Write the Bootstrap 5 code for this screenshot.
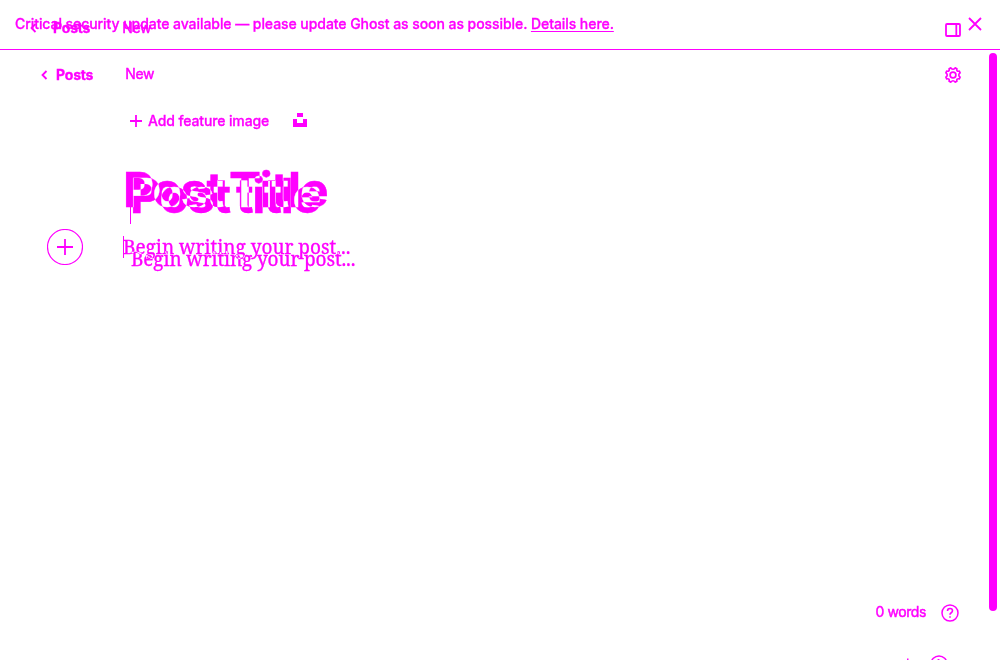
<!DOCTYPE html>
<html lang="en">
<head>
<meta charset="utf-8">
<meta name="viewport" content="width=device-width, initial-scale=1">
<title>Post editor</title>
<link href="https://cdn.jsdelivr.net/npm/bootstrap@5.3.0/dist/css/bootstrap.min.css" rel="stylesheet">
<style>
  :root { --ink: #ff00ff; }
  body { width: 1000px; height: 660px; overflow: hidden; background: #fff; color: var(--ink); font: 500 14px/20px Inter, sans-serif; -webkit-text-stroke: .3px var(--ink); }
  svg { display: block; fill: none; stroke: var(--ink); stroke-width: 1.8; flex: none; }
  .notice { height: 50px; border-bottom: 1px solid var(--ink); padding: 0 18px 2px 15px; letter-spacing: -.062px; white-space: nowrap; }
  .notice a { color: inherit; text-underline-offset: 2px; }
  .behind { position: absolute; left: 30px; top: 18px; }
  /* a second copy of the text cancels the first where they cross */
  .cross { position: absolute; color: #0f0; -webkit-text-stroke-color: #0f0; mix-blend-mode: difference; white-space: nowrap; }
  .toolbar { height: 50px; padding: 0 39px 0 41px; }
  .back { letter-spacing: -.2px; }
  .plain { font-weight: 400; -webkit-text-stroke-width: .45px; letter-spacing: -.4px; }
  .feature { padding: 11px 0 0 130px; height: 62px; letter-spacing: -.12px; }
  .title { font-size: 48px; line-height: 56px; font-weight: 700; letter-spacing: -1.2px; word-spacing: -4px; -webkit-text-stroke-width: .4px; }
  .title-row { height: 63px; padding: 0 0 0 123px; }
  .copy { font: 400 19px/24px "Noto Serif", "Liberation Serif", serif; white-space: nowrap; }
  .copy.cross { letter-spacing: -.12px; }
  .scroll { position: absolute; left: 989px; top: 53px; width: 8px; height: 558px; border-radius: 4px; background: var(--ink); }
  .caret { position: absolute; width: 1px; background: var(--ink); }
  .foot { padding: 0 41px 36px 0; gap: 15px; }
</style>
</head>
<body class="position-relative d-flex flex-column">
  <div class="notice d-flex align-items-center justify-content-between flex-shrink-0">
    <span>Critical security update available — please update Ghost as soon as possible. <a href="#">Details here.</a></span>
    <svg width="14" height="14" viewBox="0 0 14 14"><path d="M1 1l12 12M13 1L1 13"/></svg>
  </div>
  <div class="behind d-flex align-items-center">
    <svg width="7" height="10" viewBox="0 0 7 10"><path d="M5.5 1L1.5 5l4 4"/></svg>
    <span class="fw-bold back" style="margin-left:16px">Posts</span><span class="plain" style="margin-left:32px">New</span>
  </div>
  <svg class="position-absolute" style="left:945px;top:23px" width="16" height="14" viewBox="0 0 16 14"><path d="M2 1h12q1 0 1 1v10q0 1-1 1H2q-1 0-1-1V2q0-1 1-1zM11.300 1v12"/></svg>

  <div class="toolbar d-flex align-items-center flex-shrink-0">
    <svg width="7" height="10" viewBox="0 0 7 10"><path d="M5.500 1L1.500 5l4 4"/></svg>
    <span class="fw-bold back" style="margin-left:8px">Posts</span>
    <span class="plain" style="margin-left:32px;padding-bottom:2px">New</span>
    <svg class="ms-auto" width="16" height="16" viewBox="0 0 16 16"><path stroke-width="1.700" stroke-linejoin="round" d="M5.900 .9Q8 3.600 10.100 .9L11.900 1.700Q11.200 4.800 14.300 4.100L15.100 5.900Q12.400 8 15.100 10.100L14.300 11.900Q11.200 11.200 11.900 14.300L10.100 15.100Q8 12.400 5.900 15.100L4.100 14.300Q4.800 11.200 1.700 11.900L.9 10.100Q3.600 8 .9 5.900L1.700 4.100Q4.800 4.800 4.100 1.700Z"/><circle cx="8" cy="8" r="2.900" stroke-width="1.700"/></svg>
  </div>

  <div class="feature d-flex align-items-start flex-shrink-0">
    <svg style="margin-top:4px" width="12" height="12" viewBox="0 0 12 12"><path d="M6 0v12M0 6h12"/></svg>
    <span style="margin-left:6px">Add feature image</span>
    <svg style="margin:2px 0 0 24px;fill:#f0f;stroke:none" width="14" height="14" viewBox="0 0 14 14"><path d="M4 0h6v4H4zM0 6h4v4h6V6h4v8H0z"/></svg>
  </div>

  <div class="title-row flex-shrink-0"><div class="title">Post Title</div></div>
  <div class="title cross" style="left:130px;top:168px">Post title</div>
  <i class="caret" style="left:130px;top:205px;height:19px"></i>

  <div class="d-flex align-items-start flex-shrink-0" style="padding:4px 0 0 47px">
    <svg width="36" height="36" viewBox="0 0 36 36"><circle cx="18" cy="18" r="17.500" stroke-width="1.200"/><path d="M18 10v16M10 18h16"/></svg>
    <span class="copy" style="margin:6px 0 0 40px">Begin writing your post...</span>
  </div>
  <div class="copy cross" style="left:131px;top:247px">Begin writing your post...</div>
  <i class="caret" style="left:123px;top:236px;height:22px"></i>

  <div class="foot d-flex align-items-center justify-content-end mt-auto">
    <span class="plain" style="padding-bottom:2px">0 words</span>
    <svg width="18" height="18" viewBox="0 0 18 18"><circle cx="9" cy="9" r="8" stroke-width="1.500"/><path stroke-width="1.600" d="M6.500 7Q6.500 4.500 9 4.500t2.500 2.200Q11.500 8 10 9q-1 .7-1 1.700M9 12.300v1.500"/></svg>
  </div>
  <svg class="position-absolute" style="left:906px;top:655px" width="42" height="5" viewBox="0 0 42 5"><path d="M1 4.500h1.500M32.500 4v1"/><circle cx="33" cy="9" r="8" stroke-width="1.500"/></svg>
  <div class="scroll"></div>
</body>
</html>
